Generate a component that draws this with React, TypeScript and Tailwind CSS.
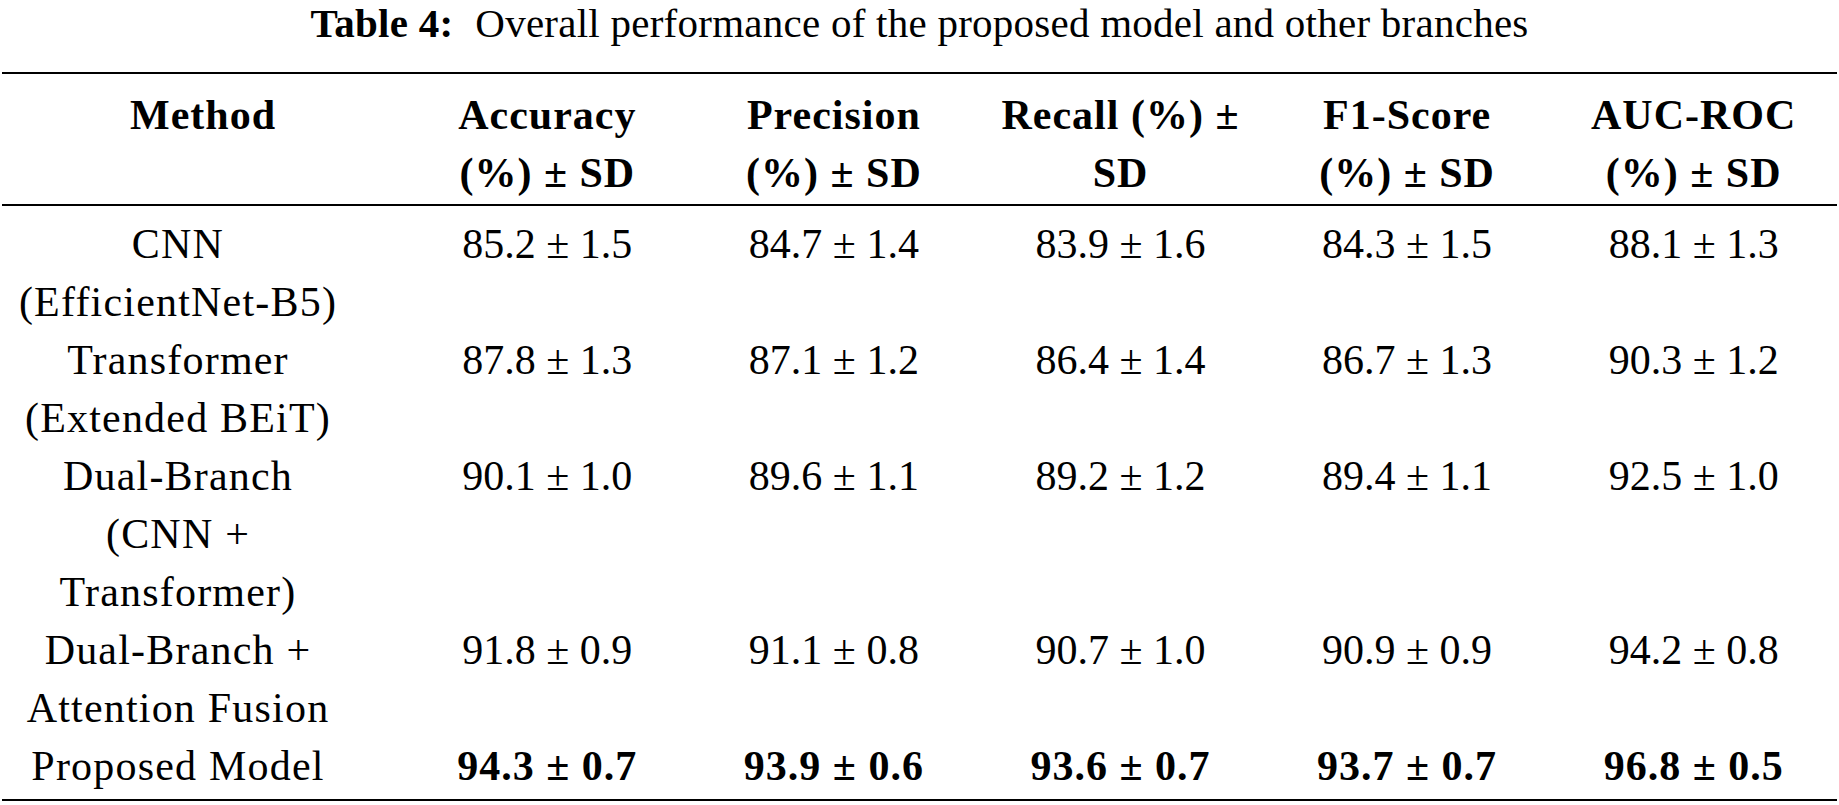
import React from "react";

type Row = { method: string[]; values: string[]; bold?: boolean };

const rows: Row[] = [
  { method: ["CNN", "(EfficientNet-B5)"], values: ["85.2 ± 1.5", "84.7 ± 1.4", "83.9 ± 1.6", "84.3 ± 1.5", "88.1 ± 1.3"] },
  { method: ["Transformer", "(Extended BEiT)"], values: ["87.8 ± 1.3", "87.1 ± 1.2", "86.4 ± 1.4", "86.7 ± 1.3", "90.3 ± 1.2"] },
  { method: ["Dual-Branch", "(CNN +", "Transformer)"], values: ["90.1 ± 1.0", "89.6 ± 1.1", "89.2 ± 1.2", "89.4 ± 1.1", "92.5 ± 1.0"] },
  { method: ["Dual-Branch +", "Attention Fusion"], values: ["91.8 ± 0.9", "91.1 ± 0.8", "90.7 ± 1.0", "90.9 ± 0.9", "94.2 ± 0.8"] },
  { method: ["Proposed Model"], values: ["94.3 ± 0.7", "93.9 ± 0.6", "93.6 ± 0.7", "93.7 ± 0.7", "96.8 ± 0.5"], bold: true },
];

const headers: string[][] = [
  ["Method"],
  ["Accuracy", "(%) ± SD"],
  ["Precision", "(%) ± SD"],
  ["Recall (%) ±", "SD"],
  ["F1-Score", "(%) ± SD"],
  ["AUC-ROC", "(%) ± SD"],
];

export default function App() {
  return (
    <div className="w-[1839px] h-[805px] bg-white text-black font-['Liberation_Serif',serif] overflow-hidden">
      <div className="h-[46px] text-center text-[41px] leading-[46px] whitespace-nowrap tracking-[0.25px]">
        <span className="font-bold">Table 4:</span>
        <span className="ml-[22px]">Overall performance of the proposed model and other branches</span>
      </div>
      <div className="mt-[26px] ml-[2px] w-[1835px]">
        <div className="h-[2px] bg-black" />
        <div className="grid grid-cols-[402px_repeat(5,1fr)] pt-[12px] pb-[2px] text-[42px] leading-[58px] font-bold tracking-[1px]">
          {headers.map((h, i) => (
            <div key={i} className="text-center whitespace-nowrap">
              {h.map((line, j) => (
                <div key={j}>{line}</div>
              ))}
            </div>
          ))}
        </div>
        <div className="h-[2px] bg-black" />
        <div className="pt-[9px] pb-[4px] text-[42px] leading-[58px]">
          {rows.map((r, i) => (
            <div key={i} className="grid grid-cols-[402px_repeat(5,1fr)]">
              <div className="pr-[50px] text-center whitespace-nowrap tracking-[1.2px]">
                {r.method.map((line, j) => (
                  <div key={j}>{line}</div>
                ))}
              </div>
              {r.values.map((v, j) => (
                <div
                  key={j}
                  className={
                    r.bold
                      ? "text-center whitespace-nowrap font-bold tracking-[1px]"
                      : "text-center whitespace-nowrap tracking-[0px]"
                  }
                >
                  {v}
                </div>
              ))}
            </div>
          ))}
        </div>
        <div className="h-[2px] bg-black" />
      </div>
    </div>
  );
}
